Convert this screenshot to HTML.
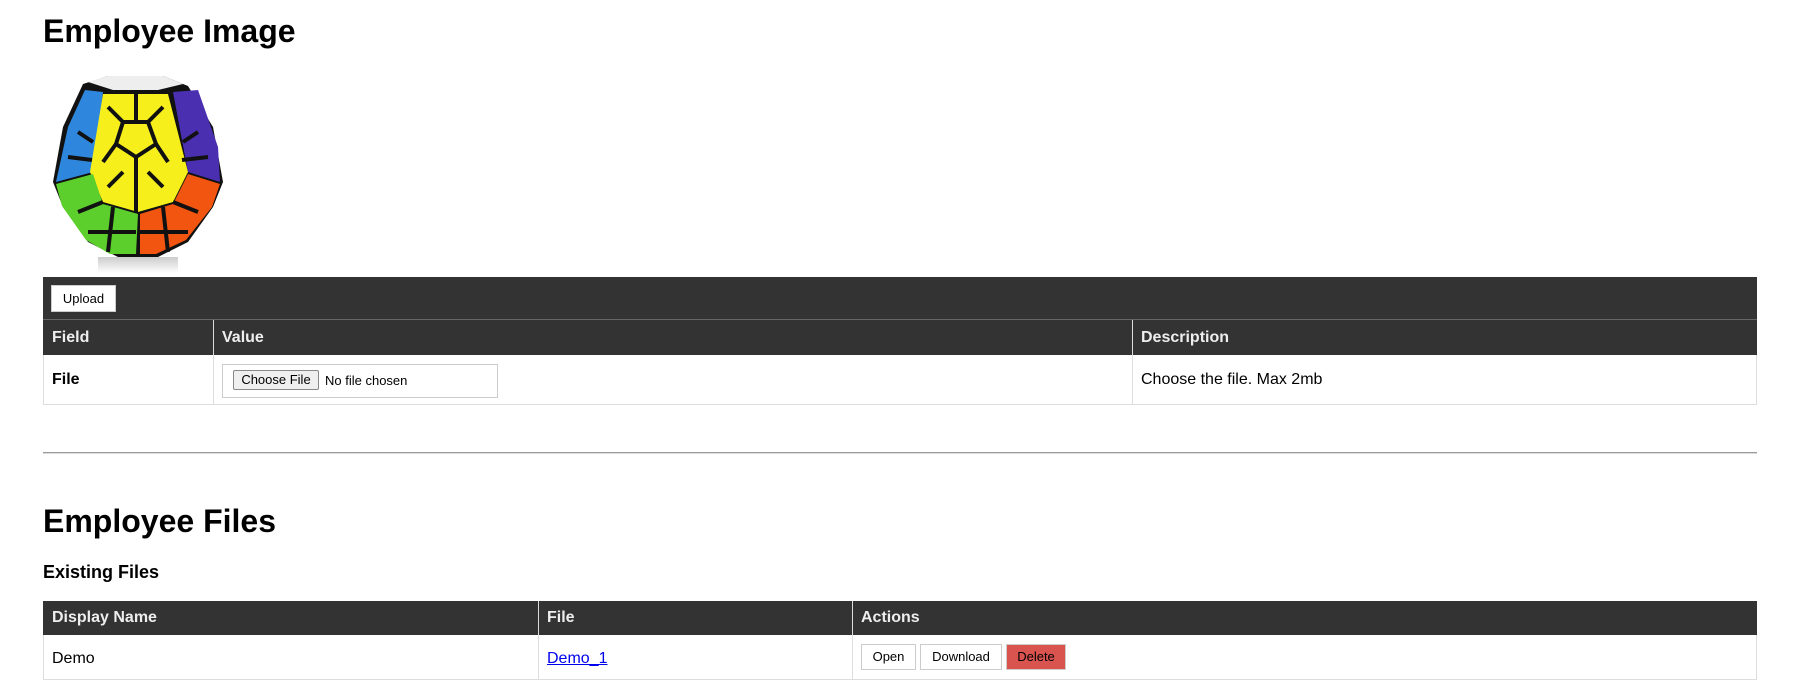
<!DOCTYPE html>
<html><head><meta charset="utf-8"><style>
body{margin:0;width:1795px;height:697px;background:#fff;font-family:"Liberation Sans",Arial,sans-serif;color:#000;position:relative;overflow:hidden}
.a{position:absolute}
h1{position:absolute;margin:0;font-size:32px;font-weight:bold;left:43px;line-height:1}
.dark{background:#333;color:#eee;font-weight:bold;font-size:16px}
.cell{position:absolute;box-sizing:border-box}
.btn{position:absolute;box-sizing:border-box;background:#fff;border:1px solid #ccc;font-size:13px;text-align:center;line-height:24px}
</style></head><body>
<h1 style="top:15px">Employee Image</h1>
<svg class="a" style="left:48px;top:72px" width="182" height="202" viewBox="0 0 182 202">
<defs><linearGradient id="r" x1="0" y1="0" x2="0" y2="1"><stop offset="0" stop-color="#ccc"/><stop offset="1" stop-color="#fff"/></linearGradient></defs>
<rect x="50" y="185" width="80" height="16" fill="url(#r)"/>
<polygon points="35,12 60,4 115,4 140,14 165,55 175,110 165,135 140,170 110,185 70,185 40,170 15,135 5,110 15,55" fill="#111"/>
<polygon points="20,55 37,18 55,20 45,100 8,110" fill="#2f86dd"/>
<polygon points="125,20 150,18 170,75 172,110 140,100" fill="#4a2fb0"/>
<polygon points="55,22 120,22 140,100 125,130 90,140 55,130 42,100" fill="#f7ef1c"/>
<polygon points="8,112 45,102 55,132 90,142 88,182 62,182 38,168 14,134" fill="#5ccf2c"/>
<polygon points="92,142 125,132 140,102 172,112 164,135 138,168 108,182 92,182" fill="#f2550f"/>
<g stroke="#111" stroke-width="4" fill="none">
<polygon points="75,50 100,50 108,72 88,85 68,72"/>
<path d="M88,22 L88,50 M60,35 L75,50 M115,35 L100,50 M55,90 L68,72 M120,90 L108,72 M88,85 L88,140 M60,115 L75,100 M115,115 L100,100 M30,60 L45,70 M20,85 L44,88 M150,60 L135,70 M160,85 L134,88 M30,140 L55,130 M40,160 L88,160 M150,140 L125,130 M140,160 L92,160 M65,135 L60,180 M115,135 L120,180"/>
</g>
<polygon points="40,10 60,4 115,4 135,12 110,18 65,18" fill="#eee"/>
</svg>
<div class="a dark" style="left:43px;top:277px;width:1714px;height:43px"></div>
<div class="btn" style="left:51px;top:285px;width:65px;height:27px;line-height:25px;font-size:13px;color:#000">Upload</div>
<div class="a" style="left:43px;top:319px;width:1714px;height:1px;background:#666"></div>
<div class="a dark" style="left:43px;top:320px;width:1714px;height:35px"></div>
<div class="a" style="left:213px;top:320px;width:1px;height:85px;background:#ddd"></div>
<div class="a" style="left:1132px;top:320px;width:1px;height:85px;background:#ddd"></div>
<div class="a" style="left:52px;top:329px;font-weight:bold;color:#eee">Field</div>
<div class="a" style="left:222px;top:329px;font-weight:bold;color:#eee">Value</div>
<div class="a" style="left:1141px;top:329px;font-weight:bold;color:#eee">Description</div>
<div class="a" style="left:43px;top:355px;width:1712px;height:49px;border:1px solid #ddd;border-top:none"></div>
<div class="a" style="left:52px;top:371px;font-weight:bold;font-size:16px">File</div>
<div class="a" style="left:222px;top:364px;width:274px;height:32px;border:1px solid #ccc"></div>
<div class="a" style="left:233px;top:370px;width:86px;height:20px;box-sizing:border-box;border:1px solid #888;border-radius:2px;background:#efefef;font-size:13px;text-align:center;line-height:18px">Choose File</div>
<div class="a" style="left:325px;top:373px;font-size:13px">No file chosen</div>
<div class="a" style="left:1141px;top:371px;font-size:16px">Choose the file. Max 2mb</div>
<div class="a" style="left:43px;top:452px;width:1714px;height:1px;background:#999;border-bottom:1px solid #ddd"></div>
<h1 style="top:505px">Employee Files</h1>
<div class="a" style="left:43px;top:562px;font-size:18px;font-weight:bold">Existing Files</div>
<div class="a dark" style="left:43px;top:601px;width:1714px;height:34px"></div>
<div class="a" style="left:538px;top:601px;width:1px;height:78px;background:#ddd"></div>
<div class="a" style="left:852px;top:601px;width:1px;height:78px;background:#ddd"></div>
<div class="a" style="left:52px;top:609px;font-weight:bold;color:#eee">Display Name</div>
<div class="a" style="left:547px;top:609px;font-weight:bold;color:#eee">File</div>
<div class="a" style="left:861px;top:609px;font-weight:bold;color:#eee">Actions</div>
<div class="a" style="left:43px;top:635px;width:1712px;height:44px;border:1px solid #ddd;border-top:none"></div>
<div class="a" style="left:52px;top:650px;font-size:16px">Demo</div>
<div class="a" style="left:547px;top:650px;font-size:16px;color:#00e;text-decoration:underline">Demo_1</div>
<div class="btn" style="left:861px;top:644px;width:55px;height:26px">Open</div>
<div class="btn" style="left:920px;top:644px;width:82px;height:26px">Download</div>
<div class="btn" style="left:1006px;top:644px;width:60px;height:26px;background:#d9534f;border-color:#ccc">Delete</div>
</body></html>
